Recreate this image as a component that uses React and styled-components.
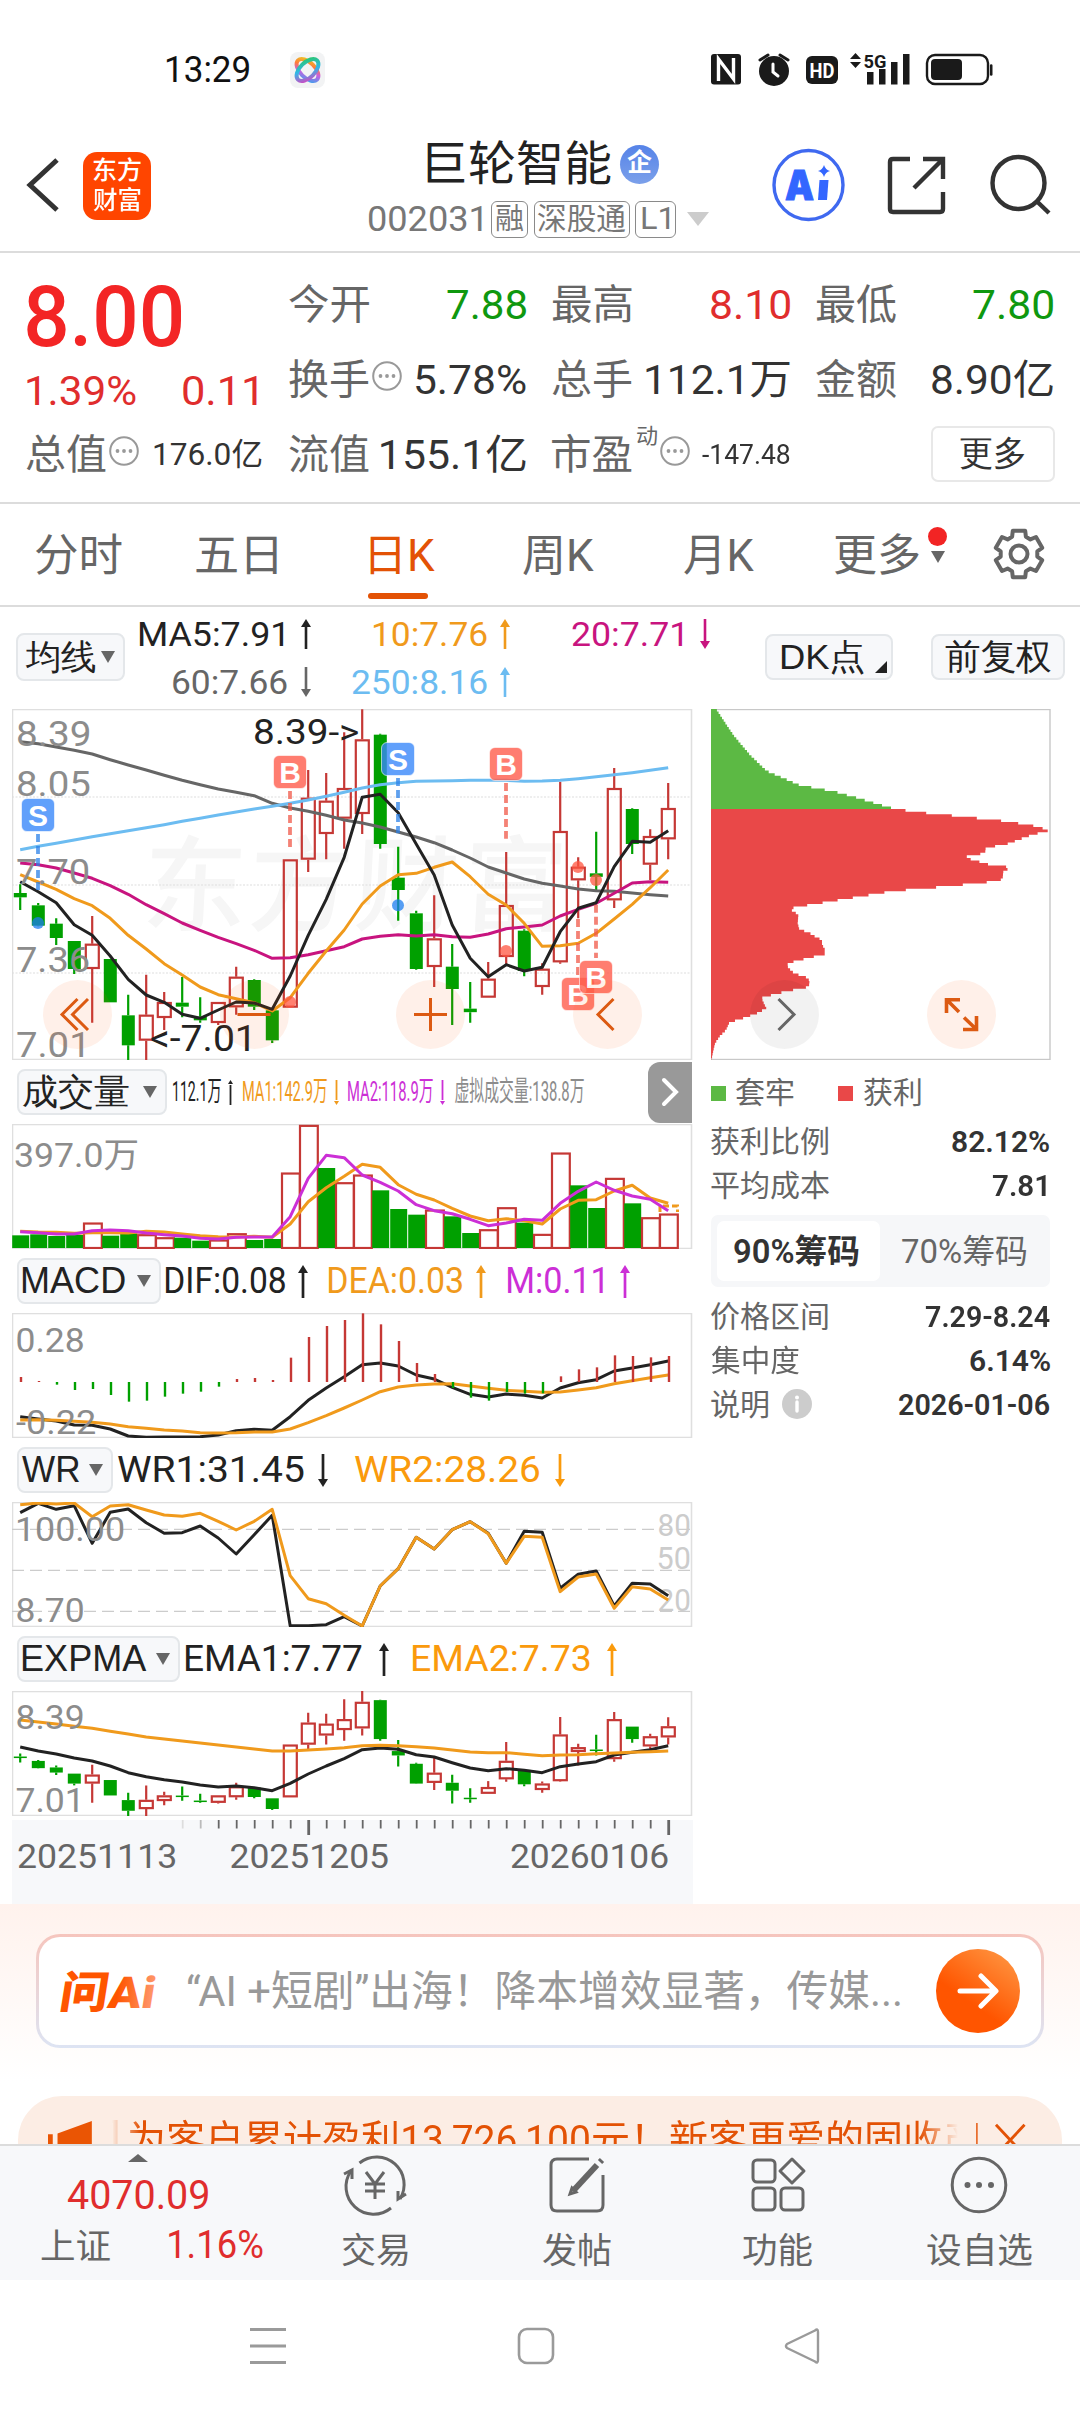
import React from "react";
import styled, { createGlobalStyle, css } from "styled-components";

const FONT = 'Roboto, "Noto Sans CJK SC", sans-serif';

const C = {
  ink: "#222",
  text: "#333",
  sub: "#666",
  label: "#8c8c8c",
  red: "#e02d2d",
  green: "#0f980f",
  up: "#c53835",
  down: "#00a000",
  orange: "#f09a1c",
  magenta: "#c8147f",
  purple: "#cc2fd6",
  sky: "#6cbcf1",
  brand: "#e35205",
  line: "#dcdcdc",
  chip: "#f7f8fa",
};

const Global = createGlobalStyle`
  * { box-sizing: border-box; }
  html, body { margin: 0; padding: 0; background: #fff; }
  body { width: 1080px; font-family: ${FONT}; color: ${C.text}; overflow-x: hidden; }
`;

/* ---------- text that fills an exact ink width ---------- */

let ctx;
function measure(text, size, weight) {
  if (!ctx) ctx = document.createElement("canvas").getContext("2d");
  ctx.font = `${weight} ${size}px ${FONT}`;
  const m = ctx.measureText(text);
  return { left: -m.actualBoundingBoxLeft, width: m.actualBoundingBoxLeft + m.actualBoundingBoxRight };
}

const FitBox = styled.span`
  display: block;
  flex: none;
  height: 1.2em;
  line-height: 1.2em;
  white-space: pre;
  color: ${(p) => p.$color};
  font-size: ${(p) => p.$size}px;
  font-weight: ${(p) => p.$weight};
  margin-left: ${(p) => p.$ml || 0}px;
  position: relative;
  top: ${(p) => p.$dy || 0}px;
`;
const FitInner = styled.span`
  display: inline-block;
  transform-origin: 0 50%;
`;

function Fit({ w, size, weight = 400, color = "inherit", ml, dy, children }) {
  const m = measure(children, size, weight);
  const s = w / m.width;
  return (
    <FitBox $size={size} $weight={weight} $color={color} $ml={ml} $dy={dy} style={{ width: w }}>
      <FitInner style={{ transform: `translateX(${-m.left * s}px) scaleX(${s})` }}>{children}</FitInner>
    </FitBox>
  );
}

function T({ x, y, w, size, color = C.label, weight = 400, children }) {
  const m = measure(children, size, weight);
  const s = w ? w / m.width : 1;
  return (
    <text
      transform={`translate(${x - m.left * s} ${y}) scale(${s} 1)`}
      fontSize={size}
      fontWeight={weight}
      fontFamily={FONT}
      fill={color}
    >
      {children}
    </text>
  );
}

/* ---------- status bar ---------- */

const StatusBar = styled.div`
  height: 140px;
  padding: 0 87px 0 167px;
  display: flex;
  align-items: center;
`;
const AppDot = styled.svg`
  margin-left: 41px;
`;
const StatusIcons = styled.svg`
  margin-left: auto;
`;

function Status() {
  return (
    <StatusBar>
      <Fit w={82} size={36} color="#111" dy={1}>13:29</Fit>
      <AppDot width="35" height="36" viewBox="0 0 35 36">
        <defs>
          <linearGradient id="rb" x1="0" y1="0" x2="1" y2="1">
            <stop offset="0" stopColor="#e8d020" />
            <stop offset=".35" stopColor="#ff7a3c" />
            <stop offset=".6" stopColor="#c860e0" />
            <stop offset="1" stopColor="#2ca8f0" />
          </linearGradient>
          <linearGradient id="rb2" x1="1" y1="0" x2="0" y2="1">
            <stop offset="0" stopColor="#28c860" />
            <stop offset=".5" stopColor="#30b8e8" />
            <stop offset="1" stopColor="#e03cc0" />
          </linearGradient>
        </defs>
        <rect width="35" height="36" rx="8" fill="#f2f3f4" />
        <ellipse cx="17.5" cy="18" rx="13.5" ry="7.5" transform="rotate(45 17.5 18)" fill="none" stroke="url(#rb)" strokeWidth="4" />
        <ellipse cx="17.5" cy="18" rx="13.5" ry="7.5" transform="rotate(-45 17.5 18)" fill="none" stroke="url(#rb2)" strokeWidth="4" />
      </AppDot>
      <StatusIcons width="283" height="34" viewBox="710 53 283 34">
        <rect x="711" y="54" width="30" height="30.5" rx="3" fill="#1a1a1a" />
        <path d="M718.5 81 V59 L733.5 79 V58" fill="none" stroke="#fff" strokeWidth="3.4" />
        <circle cx="774" cy="71" r="15" fill="#1a1a1a" />
        <path d="M760 60 L768 55 M788 60 L780 55" stroke="#1a1a1a" strokeWidth="3" strokeLinecap="round" />
        <path d="M773 64 V72 L778 76" fill="none" stroke="#fff" strokeWidth="3" strokeLinecap="round" />
        <rect x="806" y="56" width="32" height="28" rx="6" fill="#1a1a1a" />
        <T x={810.5} y={77.5} w={23.5} size={21} weight={700} color="#fff">HD</T>
        <path d="M850 59 L855.5 53 L861 59 Z M850 62 L855.5 68 L861 62 Z" fill="#1a1a1a" />
        <T x={863.5} y={67.5} w={22} size={19} weight={700} color="#1a1a1a">5G</T>
        <path d="M867 72h6.5v12.5h-6.5z M879 69h6.5v15.5h-6.5z M891 62h6.5v22.5h-6.5z M903 54h6.5v30.5h-6.5z" fill="#1a1a1a" />
        <rect x="927" y="55" width="61" height="29" rx="8" fill="none" stroke="#1a1a1a" strokeWidth="2.4" />
        <rect x="931" y="59" width="31" height="21" rx="4" fill="#1a1a1a" />
        <path d="M991.2 65.5 V74.5" stroke="#1a1a1a" strokeWidth="2.6" strokeLinecap="round" />
      </StatusIcons>
    </StatusBar>
  );
}

/* ---------- title bar ---------- */

const Header = styled.header`
  height: 113px;
  border-bottom: 2px solid ${C.line};
  padding: 0 28px 0 26px;
  display: flex;
  align-items: flex-start;
`;
const BackIcon = styled.svg`
  margin-top: 18px;
`;
const Logo = styled.div`
  width: 68px;
  height: 68px;
  margin: 12px 0 0 24px;
  border-radius: 14px;
  background: #ff4500;
  display: flex;
  flex-direction: column;
  align-items: center;
  justify-content: center;
  gap: 0;
`;
const Titles = styled.div`
  width: 342px;
  margin-left: 217px;
`;
const TitleRow = styled.div`
  display: flex;
  align-items: center;
  height: 48px;
  padding-left: 59px;
`;
const Enterprise = styled.span`
  width: 39px;
  height: 39px;
  margin-left: 9px;
  border-radius: 50%;
  background: linear-gradient(#5683e8, #7ba0ea);
  display: flex;
  align-items: center;
  justify-content: center;
`;
const CodeRow = styled.div`
  display: flex;
  align-items: center;
  height: 38px;
  margin-top: 12px;
`;
const Tag = styled.span`
  width: ${(p) => p.$w}px;
  height: 37px;
  margin-left: ${(p) => p.$ml}px;
  border: 1.5px solid #8a8a8a;
  border-radius: 6px;
  display: flex;
  align-items: center;
  justify-content: center;
`;
const Caret = styled.span`
  width: 0;
  height: 0;
  flex: none;
  margin-left: ${(p) => p.$ml || 0}px;
  border-left: ${(p) => p.$w / 2}px solid transparent;
  border-right: ${(p) => p.$w / 2}px solid transparent;
  ${(p) =>
    p.$up
      ? css`border-bottom: ${p.$h}px solid ${p.$c};`
      : css`border-top: ${p.$h}px solid ${p.$c};`}
`;
const HeadIcons = styled.svg`
  margin: 4px 0 0 auto;
`;

function TitleBar() {
  return (
    <Header>
      <BackIcon width="33" height="54" viewBox="0 0 33 54">
        <path d="M31 2 L4 27 L31 52" fill="none" stroke="#333" strokeWidth="5" />
      </BackIcon>
      <Logo>
        <Fit w={48} size={25} weight={500} color="#fff">东方</Fit>
        <Fit w={48} size={25} weight={500} color="#fff">财富</Fit>
      </Logo>
      <Titles>
        <TitleRow>
          <Fit w={184} size={47} color={C.ink} dy={0.5}>巨轮智能</Fit>
          <Enterprise>
            <Fit w={25} size={25} weight={700} color="#fff" dy={-1}>企</Fit>
          </Enterprise>
        </TitleRow>
        <CodeRow>
          <Fit w={114} size={35} color="#777" dy={1}>002031</Fit>
          <Tag $w={37} $ml={9}><Fit w={27} size={29} color="#777">融</Fit></Tag>
          <Tag $w={96} $ml={6}><Fit w={88} size={30} color="#777">深股通</Fit></Tag>
          <Tag $w={41} $ml={5}><Fit w={28} size={31} color="#777">L1</Fit></Tag>
          <Caret $w={22} $h={14} $c="#ccc" $ml={11} />
        </CodeRow>
      </Titles>
      <HeadIcons width="284" height="84" viewBox="768 144 284 84">
        <circle cx="808.5" cy="185" r="34.5" fill="none" stroke="#3f69f0" strokeWidth="3.4" />
        <text x="785" y="199.5" fontFamily="Inter, Roboto, sans-serif" fontWeight="900" fontSize="41" fill="#3366ff" stroke="#3366ff" strokeWidth="1" textLength="29" lengthAdjust="spacingAndGlyphs">A</text>
        <path d="M819.5 180 h9 l-1.5 20 h-9 z" fill="#3366ff" />
        <path d="M824 165 q1.5 5 6 6 q-4.500 1 -6 6 q-1.500 -5 -6 -6 q4.500 -1 6 -6z" fill="#3366ff" />
        <g fill="none" stroke="#333" strokeWidth="4.4">
          <path d="M910 159 H893 Q890 159 890 162 V209 Q890 212 893 212 H940 Q943 212 943 209 V192" />
          <path d="M923 159 H943 V179 M942 160 L914 188" />
          <circle cx="1018.500" cy="183" r="26" />
          <path d="M1036.500 201 L1049 213" />
        </g>
      </HeadIcons>
    </Header>
  );
}

/* ---------- quote grid ---------- */

const Quote = styled.section`
  height: 251px;
  padding: 15px 25px 0 26px;
  border-bottom: 2px solid ${C.line};
  display: grid;
  grid-template-columns: 236px 237px 237.5px 237px;
  grid-template-rows: 75px 75px 75px;
  column-gap: 26.600px;
`;
const PriceCell = styled.div`
  grid-row: span 2;
  padding-left: 1px;
`;
const PriceRow = styled.div`
  display: flex;
  justify-content: space-between;
  height: ${(p) => p.$h}px;
  padding-right: 5px;
  align-items: center;
`;
const Cell = styled.div`
  display: flex;
  align-items: center;
  justify-content: space-between;
`;
const Name = styled.div`
  display: flex;
  align-items: center;
  gap: 3px;
`;
const MoreButton = styled.button`
  width: 124px;
  height: 56px;
  margin: -3px -2px 0 auto;
  padding: 0;
  border: 2px solid #e8e8e8;
  border-radius: 7px;
  background: #fff;
  display: flex;
  align-items: center;
  justify-content: center;
`;
const Sup = styled.span`
  align-self: flex-start;
  margin: -7px 0 0 2px;
`;
const DotsSvg = styled.svg`
  margin-bottom: 10px;
`;

const Dots = () => (
  <DotsSvg width="30" height="30" viewBox="0 0 30 30">
    <circle cx="15" cy="15" r="13.800" fill="none" stroke="#999" strokeWidth="2" />
    <circle cx="8.500" cy="15" r="1.900" fill="#999" />
    <circle cx="15" cy="15" r="1.900" fill="#999" />
    <circle cx="21.500" cy="15" r="1.900" fill="#999" />
  </DotsSvg>
);

function QuoteCell({ name, value, w, color = C.text, size = 41, info, sup, dy }) {
  return (
    <Cell>
      <Name>
        <Fit w={80} size={41} color={C.sub}>{name}</Fit>
        {sup && <Sup><Fit w={20} size={21} color={C.sub}>{sup}</Fit></Sup>}
        {info && <Dots />}
      </Name>
      <Fit w={w} size={size} color={color} dy={dy}>{value}</Fit>
    </Cell>
  );
}

function QuotePanel() {
  return (
    <Quote>
      <PriceCell>
        <PriceRow $h={98}><Fit w={154} size={85} weight={500} color="#f32525">8.00</Fit></PriceRow>
        <PriceRow $h={51}>
          <Fit w={109} size={41} color={C.red}>1.39%</Fit>
          <Fit w={74} size={41} color={C.red}>0.11</Fit>
        </PriceRow>
      </PriceCell>
      <QuoteCell name="今开" value="7.88" w={79} color={C.green} />
      <QuoteCell name="最高" value="8.10" w={79} color={C.red} />
      <QuoteCell name="最低" value="7.80" w={80} color={C.green} />
      <QuoteCell name="换手" value="5.78%" w={110} info />
      <QuoteCell name="总手" value="112.1万" w={144} />
      <QuoteCell name="金额" value="8.90亿" w={121} />
      <QuoteCell name="总值" value="176.0亿" w={108} size={31} info dy={-1} />
      <QuoteCell name="流值" value="155.1亿" w={145} />
      <QuoteCell name="市盈" value="-147.48" w={88} size={28} sup="动" info dy={-1} />
      <Cell><MoreButton><Fit w={67} size={35} color={C.text} dy={-1}>更多</Fit></MoreButton></Cell>
    </Quote>
  );
}

/* ---------- period tabs ---------- */

const Tabs = styled.nav`
  height: 103px;
  border-bottom: 2px solid ${C.line};
  display: flex;
  align-items: center;
`;
const Tab = styled.div`
  height: 100%;
  display: flex;
  align-items: center;
  margin-left: ${(p) => p.$ml}px;
  position: relative;
`;
const Underline = styled.span`
  position: absolute;
  left: -2px;
  bottom: 6px;
  width: 60px;
  height: 6px;
  border-radius: 4px;
  background: ${C.brand};
`;
const TabMark = styled.span`
  display: flex;
  flex-direction: column;
  align-items: center;
  gap: 5px;
  margin: -20px 0 0 9px;
`;
const RedDot = styled.span`
  width: 19px;
  height: 19px;
  border-radius: 50%;
  background: #f22424;
`;
const GearIcon = styled.svg`
  margin: -2px 0 0 45px;
`;

function gearPath() {
  const pts = [];
  for (let k = 0; k < 6; k++) {
    const a = k * 60 - 90;
    [[-22, 18.500], [-15, 24], [15, 24], [22, 18.500]].forEach(([d, r]) => {
      const t = ((a + d) * Math.PI) / 180;
      pts.push(`${(27 + r * Math.cos(t)).toFixed(1)} ${(27 + r * Math.sin(t)).toFixed(1)}`);
    });
  }
  return `M${pts.join("L")}Z`;
}

function PeriodTabs() {
  return (
    <Tabs>
      <Tab $ml={35}><Fit w={87} size={44} color={C.sub} dy={2}>分时</Fit></Tab>
      <Tab $ml={74}><Fit w={81} size={44} color={C.sub} dy={2}>五日</Fit></Tab>
      <Tab $ml={93}><Fit w={65} size={44} color={C.brand} dy={2}>日K</Fit><Underline /></Tab>
      <Tab $ml={88}><Fit w={71} size={44} color={C.sub} dy={2}>周K</Fit></Tab>
      <Tab $ml={90}><Fit w={70} size={44} color={C.sub} dy={2}>月K</Fit></Tab>
      <Tab $ml={81}>
        <Fit w={84} size={44} color={C.sub} dy={2}>更多</Fit>
        <TabMark><RedDot /><Caret $w={15} $h={12} $c={C.sub} /></TabMark>
      </Tab>
      <GearIcon width="54" height="54" viewBox="0 0 54 54" fill="none" stroke={C.sub} strokeWidth="4" strokeLinejoin="round">
        <path d={gearPath()} />
        <circle cx="27" cy="27" r="8.500" />
      </GearIcon>
    </Tabs>
  );
}

/* ---------- moving-average legend ---------- */

const Legend = styled.div`
  height: 102px;
  padding: 3px 16px 0 16px;
  display: flex;
`;
const Chip = styled.button`
  height: ${(p) => p.$h || 46}px;
  width: ${(p) => p.$w}px;
  margin: ${(p) => p.$mt || 0}px 0 0 ${(p) => p.$ml || 0}px;
  padding: 0 ${(p) => p.$pr || 9}px 0 ${(p) => p.$pl || 6}px;
  flex: none;
  border: 2px solid #e4e7ea;
  border-radius: 8px;
  background: ${C.chip};
  display: flex;
  align-items: center;
  justify-content: space-between;
  position: relative;
`;
const Corner = styled.span`
  position: absolute;
  right: 4px;
  bottom: 5px;
  border-left: 12px solid transparent;
  border-bottom: 12px solid #222;
`;
const MaGrid = styled.div`
  display: grid;
  grid-template-columns: 186px 199px 200px;
  grid-template-rows: 48px 48px;
`;
const MaCell = styled.div`
  display: flex;
  align-items: center;
  justify-content: flex-end;
  gap: ${(p) => p.$gap}px;
`;
const ArrowSvg = styled.svg`
  flex: none;
  margin-left: ${(p) => p.$ml || 0}px;
`;

function Arrow({ color, up, h = 30, w = 10, ml, thin = 2.6 }) {
  return (
    <ArrowSvg $ml={ml} width={w} height={h} viewBox={`0 0 ${w} ${h}`}>
      <g transform={up ? undefined : `rotate(180 ${w / 2} ${h / 2})`}>
        <path d={`M${w / 2} ${h} V5`} stroke={color} strokeWidth={thin} />
        <path d={`M0 ${w * 0.8} L${w / 2} 0 L${w} ${w * 0.8}Z`} fill={color} />
      </g>
    </ArrowSvg>
  );
}

function MaLegend() {
  return (
    <Legend>
      <Chip $w={109} $h={48} $mt={23} $pl={9} $pr={8}>
        <Fit w={69} size={35} color={C.ink}>均线</Fit>
        <Caret $w={15} $h={12} $c={C.sub} />
      </Chip>
      <MaGrid>
        <MaCell $gap={17}><Fit w={145} size={34} color={C.ink}>MA5:7.91</Fit><Arrow up color={C.ink} /></MaCell>
        <MaCell $gap={13}><Fit w={114} size={34} color={C.orange}>10:7.76</Fit><Arrow up color={C.orange} /></MaCell>
        <MaCell $gap={17}><Fit w={111} size={34} color={C.magenta}>20:7.71</Fit><Arrow color={C.magenta} /></MaCell>
        <MaCell $gap={14}><Fit w={114} size={34} color={C.sub}>60:7.66</Fit><Arrow color={C.sub} /></MaCell>
        <MaCell $gap={13}><Fit w={135} size={34} color={C.sky}>250:8.16</Fit><Arrow up color={C.sky} /></MaCell>
      </MaGrid>
      <Chip $w={128} $mt={24} $ml={55} $pl={14}>
        <Fit w={80} size={35} color={C.ink}>DK点</Fit>
        <Corner />
      </Chip>
      <Chip $w={134} $mt={24} $ml={38} $pl={13}>
        <Fit w={105} size={36} color={C.ink}>前复权</Fit>
      </Chip>
    </Legend>
  );
}

/* ---------- charts ---------- */

const X = (i) => 20.2 + 18 * i;
const pts = (arr, y) => arr.map((v, i) => `${X(i).toFixed(1)},${y(v).toFixed(1)}`).join(" ");

function Curve({ data, y, color, w = 3 }) {
  return <polyline points={pts(data, y)} fill="none" stroke={color} strokeWidth={w} strokeLinejoin="round" />;
}

const K = [
  ["g", 553, 579, 592, 630], ["g", 609, 616, 677, 679], ["g", 655, 671, 714, 735], ["g", 723, 723, 807, 822],
  ["r", 648, 731, 807, 968], ["g", 777, 777, 907, 907], ["g", 884, 946, 1036, 1080], ["r", 824, 944, 1022, 1080],
  ["r", 876, 906, 954, 990], ["g", 831, 908, 920, 952], ["g", 892, 950, 961, 968], ["r", 906, 906, 969, 975],
  ["r", 800, 830, 922, 944], ["g", 838, 840, 920, 930], ["g", 931, 931, 1021, 1029], ["r", 478, 478, 923, 923],
  ["r", 210, 293, 479, 516], ["r", 219, 302, 402, 478], ["r", 97, 264, 356, 446], ["r", 28, 118, 342, 402],
  ["g", 101, 104, 432, 446], ["g", 440, 533, 570, 662], ["g", 632, 640, 807, 809], ["r", 586, 715, 801, 861],
  ["g", 732, 800, 867, 975], ["g", 846, 926, 934, 968], ["r", 786, 836, 893, 893], ["r", 456, 615, 771, 792],
  ["g", 688, 692, 813, 829], ["r", 790, 806, 861, 884], ["r", 245, 393, 787, 791], ["r", 472, 500, 541, 655],
  ["g", 395, 520, 528, 570], ["r", 204, 264, 601, 624], ["g", 325, 327, 432, 462], ["r", 388, 408, 494, 540],
  ["r", 249, 324, 418, 478],
];

function Candles({ y, min = 0 }) {
  return K.map(([t, h, a, b, l], i) => {
    const x = X(i);
    const top = y(a);
    const bot = Math.max(y(b), top + min);
    const c = t === "r" ? C.up : C.down;
    return (
      <g key={i}>
        <path d={`M${x} ${y(h)}V${top} M${x} ${bot}V${y(l)}`} stroke={c} strokeWidth="2.2" />
        {t === "r" ? (
          <rect x={x - 6.4} y={top + 1} width="13" height={Math.max(bot - top - 2, 2)} fill="none" stroke={c} strokeWidth="2.2" />
        ) : (
          <rect x={x - 6.400} y={top} width="13" height={bot - top} fill={c} />
        )}
      </g>
    );
  });
}

const MA5 = [545, 575, 608, 674, 706, 768, 838, 885, 907, 943, 955, 930, 906, 909, 928, 828, 706, 598, 472, 292, 283, 338, 432, 525, 675, 775, 830, 794, 813, 802, 695, 625, 608, 500, 424, 427, 392];
const MA10 = [524, 546, 568, 596, 617, 655, 706, 747, 791, 825, 861, 884, 896, 908, 933, 893, 820, 753, 690, 612, 558, 524, 520, 502, 486, 530, 583, 615, 670, 739, 737, 730, 700, 657, 613, 563, 510];
const MA20 = [489, 494, 504, 519, 535, 557, 583, 614, 641, 669, 691, 712, 731, 751, 775, 773, 764, 752, 740, 717, 709, 704, 708, 704, 710, 712, 702, 686, 681, 675, 648, 628, 610, 580, 549, 545, 547];
const MA60 = [125, 131, 141, 151, 162, 179, 195, 210, 226, 241, 254, 267, 277, 287, 310, 324, 334, 346, 360, 369, 381, 396, 411, 428, 450, 474, 501, 519, 537, 550, 558, 567, 572, 574, 579, 584, 588];
const MA250 = [449, 439, 430, 420, 410, 401, 392, 383, 374, 364, 355, 345, 336, 327, 319, 310, 300, 289, 277, 264, 254, 248, 244, 243, 242, 241, 241, 241, 244, 243, 241, 236, 230, 224, 218, 211, 203];

const SIGNALS = [
  { t: "S", i: 1, y: 345, l: [402, 570], d: 669 },
  { t: "B", i: 15, y: 216, l: [273, 441], d: 906 },
  { t: "S", i: 21, y: 177, l: [234, 400], d: 616 },
  { t: "B", i: 27, y: 192, l: [249, 416], d: 753 },
  { t: "B", i: 31, y: 882, l: [657, 826], d: 501 },
  { t: "B", i: 32, y: 831, l: [614, 774], d: 540 },
];

const ChartBox = styled.div`
  position: relative;
  height: ${(p) => p.$h}px;
`;
const ChartSvg = styled.svg`
  display: block;
`;
const RoundButton = styled.button`
  position: absolute;
  left: ${(p) => p.$x}px;
  top: ${(p) => p.$y}px;
  width: 69px;
  height: 69px;
  padding: 0;
  border: 0;
  border-radius: 50%;
  background: ${(p) => (p.$grey ? "rgba(0,0,0,.05)" : "rgba(255,90,10,.09)")};
`;

function Round({ x, y, grey, children }) {
  return (
    <RoundButton $x={x} $y={y} $grey={grey}>
      <svg width="69" height="69" viewBox="0 0 69 69" fill="none" stroke={grey ? "#666" : "#dc5a12"} strokeWidth="3">
        {children}
      </svg>
    </RoundButton>
  );
}

const Frame = ({ y, h }) => <rect x="12.500" y={y + 0.5} width="679" height={h - 0.5} fill="none" stroke="#dfdfdf" strokeWidth="1.600" />;

function MainChart() {
  const y = (v) => 700 + v / 3;
  return (
    <ChartBox $h={351}>
      <ChartSvg width="681" height="351" viewBox="12 709 681 351">
        <g fill="#f6f6f6" fontFamily='"Noto Sans CJK SC", sans-serif' fontWeight="500" fontSize="104">
          <text transform="translate(141 923) skewX(-3)">东</text>
          <text transform="translate(247 923) skewX(-3)">方</text>
          <text transform="translate(353 923) skewX(-3)">财</text>
          <text transform="translate(461 923) skewX(-3)">富</text>
        </g>
        <Frame y={709} h={350.500} />
        <path d="M12 797H692 M12 885H692 M12 973H692" stroke="#ddd" strokeWidth="1.200" strokeDasharray="2 1.500" />
        <Candles y={y} min={3.500} />
        <Curve data={MA60} y={y} color="#666" />
        <Curve data={MA250} y={y} color={C.sky} />
        <Curve data={MA20} y={y} color={C.magenta} />
        <Curve data={MA10} y={y} color={C.orange} />
        <Curve data={MA5} y={y} color={C.ink} />
        <T x={17} y={745.500} w={72} size={36}>8.39</T>
        <T x={17} y={796} w={72.500} size={36}>8.05</T>
        <T x={17} y={884.200} w={72} size={36}>7.70</T>
        <T x={17} y={972.200} w={72} size={36}>7.36</T>
        <T x={17} y={1056.800} w={66} size={36}>7.01</T>
        <T x={254} y={744.300} w={104.500} size={36} color={C.ink}>8.39-&gt;</T>
        <T x={151} y={1051} w={98} size={36} color={C.ink}>&lt;-7.01</T>
        {SIGNALS.map((s) => {
          const blue = s.t === "S";
          const x = X(s.i) - 0.2;
          return (
            <g key={s.i}>
              <path d={`M${x} ${y(s.l[0])}V${y(s.l[1])}`} stroke={blue ? "#2a80e8" : "#f05848"} strokeOpacity=".75" strokeWidth="3.800" strokeDasharray="8 4" />
              <circle cx={x} cy={y(s.d)} r="6" fill={blue ? "#1e7df0" : "#ff5540"} fillOpacity=".75" />
              <rect x={x - 16.500} y={y(s.y) - 16.500} width="33" height="33" rx="5.500" fill={blue ? "#3a88fa" : "#ff5c4c"} fillOpacity=".8" stroke="#fff" strokeOpacity=".6" strokeWidth="1" />
              <text x={x} y={y(s.y) + 10.500} textAnchor="middle" fontFamily='"Liberation Sans", sans-serif' fontWeight="700" fontSize="30" fill="#fff">{s.t}</text>
            </g>
          );
        })}
      </ChartSvg>
      <Round x={30.500} y={271}><path d="M34.500 19 L19 34.500 L34.500 50 M45 19 L29.500 34.500 L45 50" /></Round>
      <Round x={207.500} y={271}><path d="M17.500 34.500 H50.500" /></Round>
      <Round x={383.500} y={271}><path d="M18 34.500 H51 M34.500 18 V51" /></Round>
      <Round x={560.500} y={271}><path d="M40.500 19 L25 34.500 L40.500 50" /></Round>
    </ChartBox>
  );
}

const VOL = "g526 g523 g528 g525 r487 g527 g520 r522 r531 g533 g542 r538 r519 g540 g537 r337 r194 g324 r366 r343 g391 g447 g464 r448 g469 g519 r507 r441 g488 r521 r277 g376 g444 r353 g430 r471 r460"
  .split(" ").map((s) => [s[0], +s.slice(1)]);
const VMA1 = [514, 516, 517, 520, 518, 518, 519, 514, 516, 522, 527, 530, 531, 529, 532, 492, 425, 383, 349, 313, 322, 374, 403, 420, 445, 468, 482, 476, 482, 492, 447, 421, 419, 393, 376, 414, 430];
const VMA2 = [515, 518, 522, 522, 512, 510, 512, 519, 524, 528, 535, 537, 532, 531, 531, 470, 355, 286, 293, 345, 367, 393, 434, 452, 461, 478, 497, 489, 478, 481, 430, 394, 366, 391, 408, 418, 452];

function VolumeChart() {
  const y = (v) => 1060 + v / 3;
  return (
    <ChartSvg width="681" height="125" viewBox="12 1124 681 125">
      <Frame y={1124} h={124.500} />
      {VOL.map(([t, v], i) =>
        t === "g" ? (
          <rect key={i} x={X(i) - 8} y={y(v)} width="17" height={y(564) - y(v)} fill={C.down} />
        ) : (
          <rect key={i} x={X(i) - 8.200} y={y(v) + 1.200} width="17.800" height={y(564) - y(v) - 1.200} fill="#fff" stroke={C.up} strokeWidth="2.200" />
        )
      )}
      <path d="M660 1212 V1206 H677.500 V1212" fill="none" stroke={C.orange} strokeWidth="3" strokeDasharray="6 3" />
      <Curve data={VMA1} y={y} color={C.orange} />
      <Curve data={VMA2} y={y} color={C.purple} />
      <T x={15} y={1166.700} w={122} size={34}>397.0万</T>
    </ChartSvg>
  );
}

const HIST = [951, 963, 974, 990, 987, 1005, 1025, 1022, 1010, 1001, 995, 980, 957, 954, 960, 893, 831, 798, 780, 760, 793, 843, 909, 942, 984, 1013, 1022, 996, 1001, 1000, 949, 928, 922, 886, 888, 892, 888];
const DIF = [1070, 1077, 1083, 1095, 1096, 1107, 1128, 1132, 1131, 1131, 1130, 1125, 1112, 1108, 1111, 1070, 1021, 984, 950, 914, 909, 918, 945, 957, 982, 1003, 1011, 1002, 1006, 1014, 984, 968, 959, 933, 924, 914, 903];
const DEA = [1080, 1079, 1081, 1084, 1087, 1092, 1100, 1105, 1110, 1113, 1118, 1119, 1118, 1116, 1116, 1107, 1088, 1067, 1044, 1020, 995, 981, 975, 972, 971, 978, 985, 991, 994, 997, 996, 990, 983, 971, 962, 953, 945];

function MacdChart() {
  const y = (v) => 1060 + v / 3;
  return (
    <ChartSvg width="681" height="125" viewBox="12 1313 681 125">
      <Frame y={1313} h={124.500} />
      <Curve data={DIF} y={y} color={C.ink} />
      <Curve data={DEA} y={y} color={C.orange} />
      {HIST.map((v, i) => (
        <path key={i} d={`M${X(i) + 0.8} ${y(966)}V${y(v)}`} stroke={v < 966 ? C.up : C.down} strokeWidth="2.400" />
      ))}
      <T x={16.500} y={1351.500} w={67} size={34}>0.28</T>
      <T x={16} y={1433.500} w={79} size={34}>-0.22</T>
    </ChartSvg>
  );
}

const WR1 = [248, 220, 238, 227, 340, 247, 237, 278, 310, 308, 288, 324, 372, 314, 256, 587, 587, 584, 560, 588, 468, 416, 322, 357, 299, 275, 310, 400, 304, 307, 475, 433, 423, 528, 460, 462, 497];
const WR2 = [224, 219, 222, 219, 260, 228, 224, 240, 255, 259, 250, 274, 300, 274, 238, 437, 506, 521, 556, 588, 468, 416, 322, 357, 299, 275, 311, 400, 319, 322, 485, 441, 432, 535, 470, 477, 510];

function WrChart() {
  const y = (v) => 1430 + v / 3;
  return (
    <ChartSvg width="681" height="125" viewBox="12 1502 681 125">
      <Frame y={1502} h={124.500} />
      <path d={`M12 ${y(298)}H692 M12 ${y(421)}H692 M12 ${y(544)}H692`} stroke="#ccc" strokeWidth="1.300" strokeDasharray="12 6" />
      <T x={658.500} y={1536.300} w={31} size={31} color="#ccc">80</T>
      <T x={658.500} y={1569.300} w={31} size={31} color="#ccc">50</T>
      <T x={658.500} y={1611.300} w={31} size={31} color="#ccc">20</T>
      <Curve data={WR1} y={y} color={C.ink} />
      <Curve data={WR2} y={y} color={C.orange} />
      <T x={17} y={1540.500} w={107} size={34}>100.00</T>
      <T x={16.500} y={1622.300} w={67} size={34}>8.70</T>
    </ChartSvg>
  );
}

const EMA1 = [951, 963, 972, 984, 993, 1008, 1028, 1040, 1049, 1056, 1065, 1071, 1068, 1073, 1082, 1060, 1032, 1008, 986, 959, 954, 958, 974, 981, 998, 1014, 1022, 1016, 1021, 1028, 1010, 1002, 995, 975, 967, 959, 947];
const EMA2 = [870, 876, 882, 889, 895, 904, 912, 921, 927, 933, 939, 945, 951, 957, 963, 963, 960, 957, 953, 947, 946, 947, 950, 954, 960, 966, 968, 968, 973, 977, 975, 974, 971, 969, 967, 965, 963];

function ExpmaChart() {
  const y = (v) => 1430 + v / 3;
  const ky = (v) => 1691 + ((v - 27) / 1053) * 125;
  return (
    <ChartSvg width="681" height="125" viewBox="12 1691 681 125">
      <Frame y={1691} h={124.500} />
      <Candles y={ky} min={1.500} />
      <Curve data={EMA1} y={y} color={C.ink} />
      <Curve data={EMA2} y={y} color={C.orange} />
      <T x={16.500} y={1729.300} w={66} size={34}>8.39</T>
      <T x={16.500} y={1811.700} w={62} size={34}>7.01</T>
    </ChartSvg>
  );
}

const AxisSvg = styled.svg`
  display: block;
  margin-top: 4px;
  background: ${C.chip};
`;

function Axis() {
  return (
    <AxisSvg width="681" height="84" viewBox="12 1820 681 84">
      {Array.from({ length: 28 }, (_, k) => k + 9).map((i) => {
        const big = i === 16 || i === 36;
        return (
          <path key={i} d={`M${X(i) + 0.5} 1820v${big ? 15 : 8.500}`} stroke={i < 10 ? "#ddd" : i < 11 ? "#bbb" : C.sub} strokeWidth={big ? 2.800 : 1.800} />
        );
      })}
      <T x={18} y={1867.700} w={157} size={34} color={C.sub}>20251113</T>
      <T x={230.500} y={1867.700} w={157.500} size={34} color={C.sub}>20251205</T>
      <T x={511} y={1867.700} w={157} size={34} color={C.sub}>20260106</T>
    </AxisSvg>
  );
}

/* ---------- indicator headers ---------- */

const IndicatorHead = styled.div`
  height: 64px;
  padding-left: 5px;
  display: flex;
  align-items: center;
`;
const PanelToggle = styled.button`
  width: 44px;
  height: 61px;
  margin-left: auto;
  margin-right: 1px;
  padding: 0;
  border: 0;
  border-radius: 12px 0 0 12px;
  background: #999;
  display: flex;
  align-items: center;
  justify-content: center;
`;

function Picker({ w, tw, size = 37, children }) {
  return (
    <Chip $w={w} $pl={4} $pr={8}>
      <Fit w={tw} size={size} color={C.ink}>{children}</Fit>
      <Caret $w={15} $h={12} $c={C.sub} />
    </Chip>
  );
}

function Reading({ w, ml, color, up, gap, size = 37, arrow = 33, aw = 10, noArrow, children }) {
  return (
    <>
      <Fit w={w} ml={ml} size={size} color={color}>{children}</Fit>
      {!noArrow && <Arrow up={up} color={color} ml={gap} h={arrow} w={aw} thin={aw < 8 ? 1.800 : 2.700} />}
    </>
  );
}

/* ---------- chip distribution ---------- */

const PROFILE = [
  [48, 57], [100, 135], [150, 195], [200, 243], [298, 285], [408, 306], [466, 322], [567, 352], [592, 358],
  [670, 368], [750, 376], [828, 384], [897, 391], [957, 400], [995, 406], [1020, 413], [1050, 421], [1018, 429],
  [990, 437], [948, 452], [930, 460], [897, 466], [857, 476], [855, 490], [800, 498], [802, 505], [835, 513],
  [847, 521], [893, 526], [932, 533], [910, 545], [908, 565], [897, 573], [828, 580], [757, 588], [675, 595],
  [592, 602], [543, 609], [495, 617], [452, 624], [405, 632], [358, 640], [316, 647], [274, 655], [276, 662],
  [295, 674], [293, 700], [298, 718], [327, 728], [343, 738], [366, 750], [366, 765], [374, 775], [374, 793],
  [350, 798], [325, 804], [294, 812], [263, 820], [263, 830], [276, 845], [300, 856], [325, 864], [329, 880],
  [325, 891], [265, 903], [235, 910], [187, 922], [187, 930], [199, 955], [170, 970], [135, 983], [88, 998],
  [78, 1020], [60, 1038], [45, 1060], [36, 1100], [33, 1111],
];

function profileAt(v) {
  for (let k = 1; k < PROFILE.length; k++) {
    const [x1, y1] = PROFILE[k];
    const [x0, y0] = PROFILE[k - 1];
    if (v <= y1) return x0 + ((x1 - x0) * (v - y0)) / (y1 - y0);
  }
  return 33;
}

function steps(from, to) {
  const step = 7.7;
  let d = `M711 ${690 + from / 3}`;
  for (let v = from; v < to - 1; v += step) {
    const x = 700 + profileAt(Math.min(v + step / 2, to)) / 3;
    d += `H${x.toFixed(1)}V${(690 + Math.min(v + step, to) / 3).toFixed(1)}`;
  }
  return `${d}H711Z`;
}

function ProfileChart() {
  return (
    <ChartBox $h={351}>
      <ChartSvg width="340" height="351" viewBox="711 709 340 351">
        <rect x="711.500" y="709.500" width="338.500" height="350" fill="none" stroke="#c8c8c8" strokeWidth="1.400" />
        <path d={steps(57, 357.300)} fill="#5cb944" />
        <path d={steps(357.300, 1111)} fill="#e94848" />
      </ChartSvg>
      <Round x={39} y={271} grey><path d="M28.500 19 L44 34.500 L28.500 50" /></Round>
      <Round x={216} y={271}>
        <g strokeWidth="3.600">
          <path d="M19.500 33 V19.700 H33 M20 20 L32 32" />
          <path d="M49.500 36 V49.500 H36 M49 49 L37 37.500" />
        </g>
      </Round>
    </ChartBox>
  );
}

const ChipPanel = styled.aside`
  width: 340px;
  margin-left: 18px;
`;
const ColorKeys = styled.div`
  height: 59px;
  display: flex;
  align-items: center;
  padding-top: 7px;
`;
const Square = styled.span`
  width: 15px;
  height: 15px;
  background: ${(p) => p.$c};
  margin-left: ${(p) => p.$ml || 0}px;
`;
const StatRow = styled.div`
  height: 44px;
  display: flex;
  align-items: center;
  padding-right: ${(p) => p.$pr || 1}px;
  > :last-child { margin-left: auto; }
`;
const Info = styled.svg`
  margin-left: 14px;
`;
const Segmented = styled.div`
  height: 72px;
  margin: 8px 1px 7px 0;
  padding: 6px;
  border-radius: 7px;
  background: #f6f7f9;
  display: grid;
  grid-template-columns: 163px 164px;
`;
const Segment = styled.div`
  border-radius: 7px;
  background: ${(p) => (p.$on ? "#fff" : "transparent")};
  display: flex;
  align-items: center;
  justify-content: center;
  padding-right: ${(p) => (p.$on ? 4 : 0)}px;
  padding-left: ${(p) => (p.$on ? 0 : 5)}px;
`;

function Stat({ name, nw, value, vw, info, pr }) {
  return (
    <StatRow $pr={pr}>
      <Fit w={nw} size={30} color={C.sub} dy={1}>{name}</Fit>
      {info && (
        <Info width="30" height="30" viewBox="0 0 30 30">
          <circle cx="15" cy="15" r="15" fill="#ccc" />
          <circle cx="15" cy="8.500" r="2" fill="#fff" />
          <path d="M15 13V22" stroke="#fff" strokeWidth="3.400" strokeLinecap="round" />
        </Info>
      )}
      <Fit w={vw} size={30} weight={600} color={C.text} dy={1}>{value}</Fit>
    </StatRow>
  );
}

/* ---------- page body ---------- */

const Body = styled.main`
  display: flex;
  height: 1195px;
`;
const Charts = styled.div`
  width: 681px;
  margin-left: 12px;
`;

const AiZone = styled.section`
  height: 240px;
  padding: 30px 36px 0;
  background: linear-gradient(#fff2ed, #fff 178px);
  overflow: hidden;
`;
const AskBox = styled.div`
  height: 114px;
  border: 3px solid transparent;
  border-radius: 24px;
  background: linear-gradient(#fff, #fff) padding-box, linear-gradient(#f6c5bd, #dde4f3) border-box;
  display: flex;
  align-items: center;
  padding: 0 21px 0 17px;
`;
const AskGo = styled.span`
  width: 84px;
  height: 84px;
  margin-left: auto;
  border-radius: 50%;
  background: linear-gradient(215deg, #ff9440 8%, #ff5500 62%);
  display: flex;
  align-items: center;
  justify-content: center;
`;
const Notice = styled.div`
  height: 90px;
  margin: 48px -18px 0;
  padding: 20px 30px 0 30px;
  border-radius: 44px;
  background: #fcede4;
  display: flex;
  align-items: flex-start;
`;
const Marquee = styled.div`
  width: 852px;
  margin-left: 16px;
  display: flex;
  mask-image: linear-gradient(90deg, transparent 4px, #000 32px, #000 812px, transparent 850px);
`;
const NoticeIcons = styled.svg`
  margin-left: 15px;
`;

function AskAi() {
  return (
    <AiZone>
      <AskBox>
        <svg width="103" height="50" viewBox="55 1966 103 50">
          <defs>
            <linearGradient id="ask" x1="0" y1="0" x2="1" y2="0">
              <stop offset=".6" stopColor="#ff5500" />
              <stop offset="1" stopColor="#ff9a70" />
            </linearGradient>
          </defs>
          <text transform="translate(57 2008) skewX(-9)" fontFamily='Roboto, "Noto Sans CJK SC", sans-serif' fontWeight="900" fontSize="44" fill="url(#ask)" textLength="95" lengthAdjust="spacingAndGlyphs">问Ai</text>
        </svg>
        <Fit w={712} ml={29} size={42} color="#999" dy={1}>“AI +短剧”出海！降本增效显著，传媒...</Fit>
        <AskGo>
          <svg width="42" height="38" viewBox="0 0 42 38" fill="none" stroke="#fff" strokeWidth="5" strokeLinecap="round" strokeLinejoin="round">
            <path d="M3 19H38 M24 4L39 19L24 34" />
          </svg>
        </AskGo>
      </AskBox>
      <Notice>
        <svg width="46" height="50" viewBox="0 0 46 50">
          <path d="M10 17 L46 4 V50 H10Z M0 18h5v32h-5z" fill="#ea5504" />
        </svg>
        <Marquee>
          <Fit w={10} size={40} color={C.brand}>]</Fit>
          <Fit w={812} ml={11} size={40} color={C.brand} dy={1}>为客户累计盈利13,726,100元！新客更爱的固收</Fit>
          <Fit w={36} ml={3} size={40} color={C.brand}>产</Fit>
        </Marquee>
        <NoticeIcons width="60" height="50" viewBox="0 0 60 50" fill="none" stroke={C.brand}>
          <path d="M2 6V46" strokeWidth="1.500" />
          <path d="M22 8L52 40 M52 8L22 40" strokeWidth="3" />
        </NoticeIcons>
      </Notice>
    </AiZone>
  );
}

const BottomBar = styled.footer`
  height: 136px;
  border-top: 2px solid ${C.line};
  background: ${C.chip};
  display: grid;
  grid-template-columns: 274px 202px 201px 201px 202px;
`;
const IndexBox = styled.div`
  padding: 8px 0 0 2px;
  display: flex;
  flex-direction: column;
  align-items: center;
`;
const IndexRow = styled.div`
  height: 48px;
  width: 274px;
  margin-top: 12px;
  padding: 0 12px 0 40px;
  display: flex;
  align-items: center;
  justify-content: space-between;
`;
const NavItem = styled.div`
  display: flex;
  flex-direction: column;
  align-items: center;
  padding-top: 7px;
  gap: 14px;
`;

function NavButton({ label, w, children }) {
  return (
    <NavItem>
      <svg width="66" height="64" viewBox="0 0 66 64" fill="none" stroke={C.sub} strokeWidth="3">{children}</svg>
      <Fit w={w} size={35} color={C.sub}>{label}</Fit>
    </NavItem>
  );
}

const Gesture = styled.div`
  height: 132px;
  padding: 0 260px 0 249px;
  display: flex;
  align-items: center;
  justify-content: space-between;
`;

export default function App() {
  return (
    <>
      <Global />
      <Status />
      <TitleBar />
      <QuotePanel />
      <PeriodTabs />
      <MaLegend />
      <Body>
        <Charts>
          <MainChart />
          <IndicatorHead>
            <Picker w={150} tw={106} size={36}>成交量</Picker>
            <Reading w={48} ml={6} size={28} color={C.ink} up gap={7} arrow={25} aw={5}>112.1万</Reading>
            <Reading w={84} ml={9.500} size={28} color={C.orange} gap={7} arrow={25} aw={5}>MA1:142.9万</Reading>
            <Reading w={85} ml={9.500} size={28} color={C.purple} gap={7} arrow={25} aw={5}>MA2:118.9万</Reading>
            <Reading w={129} ml={9.500} size={28} color={C.label} noArrow>虚拟成交量:138.8万</Reading>
            <PanelToggle>
              <svg width="20" height="32" viewBox="0 0 20 32" fill="none" stroke="#fff" strokeWidth="4" strokeLinecap="round">
                <path d="M4 4L16 16L4 28" />
              </svg>
            </PanelToggle>
          </IndicatorHead>
          <VolumeChart />
          <IndicatorHead>
            <Picker w={144} tw={98}>MACD</Picker>
            <Reading w={119} ml={5} color={C.ink} up gap={13}>DIF:0.08</Reading>
            <Reading w={133.500} ml={21} color={C.orange} up gap={13}>DEA:0.03</Reading>
            <Reading w={95.500} ml={22} color={C.purple} up gap={17}>M:0.11</Reading>
          </IndicatorHead>
          <MacdChart />
          <IndicatorHead>
            <Picker w={96} tw={52}>WR</Picker>
            <Reading w={186} ml={5} color={C.ink} gap={14}>WR1:31.45</Reading>
            <Reading w={185} ml={27} color="#fa9a0c" gap={15}>WR2:28.26</Reading>
          </IndicatorHead>
          <WrChart />
          <IndicatorHead>
            <Picker w={163} tw={118}>EXPMA</Picker>
            <Reading w={176} ml={5.500} color={C.ink} up gap={17}>EMA1:7.77</Reading>
            <Reading w={177} ml={24} color="#fa9a0c" up gap={17}>EMA2:7.73</Reading>
          </IndicatorHead>
          <ExpmaChart />
          <Axis />
        </Charts>
        <ChipPanel>
          <ProfileChart />
          <ColorKeys>
            <Square $c="#5cb944" />
            <Fit w={58} ml={10} size={30} color={C.sub}>套牢</Fit>
            <Square $c="#e94848" $ml={44} />
            <Fit w={57} ml={11} size={30} color={C.sub}>获利</Fit>
          </ColorKeys>
          <Stat name="获利比例" nw={117} value="82.12%" vw={97} pr={2} />
          <Stat name="平均成本" nw={118} value="7.81" vw={54} pr={5} />
          <Segmented>
            <Segment $on><Fit w={125} size={33} weight={600} color={C.text} dy={1}>90%筹码</Fit></Segment>
            <Segment><Fit w={125} size={33} color={C.sub} dy={1}>70%筹码</Fit></Segment>
          </Segmented>
          <Stat name="价格区间" nw={117} value="7.29-8.24" vw={125} />
          <Stat name="集中度" nw={88} value="6.14%" vw={80} />
          <Stat name="说明" nw={57} value="2026-01-06" vw={151} info />
        </ChipPanel>
      </Body>
      <AskAi />
      <BottomBar>
        <IndexBox>
          <Caret $up $w={20} $h={8} $c={C.sub} />
          <Fit w={140} size={40} color={C.red} dy={10}>4070.09</Fit>
          <IndexRow>
            <Fit w={69} size={35} color={C.sub} dy={2}>上证</Fit>
            <Fit w={94} size={38} color={C.red}>1.16%</Fit>
          </IndexRow>
        </IndexBox>
        <NavButton label="交易" w={66}>
          <path d="M17.500 10 A27.500 27.500 0 0 1 58 46 M49 55 A27.500 27.500 0 0 1 9 18" />
          <path d="M2 21L10 17V26 M64 41L56 46V38" />
          <path d="M24 19L33 31L42 19 M33 31V46 M23 31H43 M23 38H43" />
        </NavButton>
        <NavButton label="发帖" w={68}>
          <path d="M45 6H13Q7 6 7 12V52Q7 58 13 58H53Q59 58 59 52V22" />
          <path d="M53 12L29 38" strokeWidth="6" />
          <path d="M26 41L28 35L32 39Z" />
          <path d="M56 9L58 7" strokeWidth="6" />
        </NavButton>
        <NavButton label="功能" w={69}>
          <rect x="8" y="7" width="22" height="22" rx="4" />
          <rect x="8" y="35" width="22" height="22" rx="4" />
          <rect x="36" y="35" width="22" height="22" rx="4" />
          <path d="M47 6L59 18L47 30L35 18Z" strokeLinejoin="round" />
        </NavButton>
        <NavButton label="设自选" w={105}>
          <circle cx="33" cy="32" r="26.800" />
          <g fill={C.sub} stroke="none">
            <circle cx="21.500" cy="32" r="3" />
            <circle cx="33" cy="32" r="3" />
            <circle cx="45" cy="32" r="3" />
          </g>
        </NavButton>
      </BottomBar>
      <Gesture>
        <svg width="38" height="38" viewBox="0 0 38 38" fill="none" stroke="#9a9a9a" strokeWidth="3">
          <path d="M1 2.500H37 M1 19H37 M1 35.500H37" />
        </svg>
        <svg width="38" height="38" viewBox="0 0 38 38" fill="none" stroke="#9a9a9a" strokeWidth="2.600">
          <rect x="2" y="2" width="34" height="34" rx="8" />
        </svg>
        <svg width="36" height="38" viewBox="0 0 36 38" fill="none" stroke="#9a9a9a" strokeWidth="2.400" strokeLinejoin="round">
          <path d="M31 3.500Q34 1 34 5V33Q34 37 31 34.500L3 21Q1 19 3 17Z" />
        </svg>
      </Gesture>
    </>
  );
}
